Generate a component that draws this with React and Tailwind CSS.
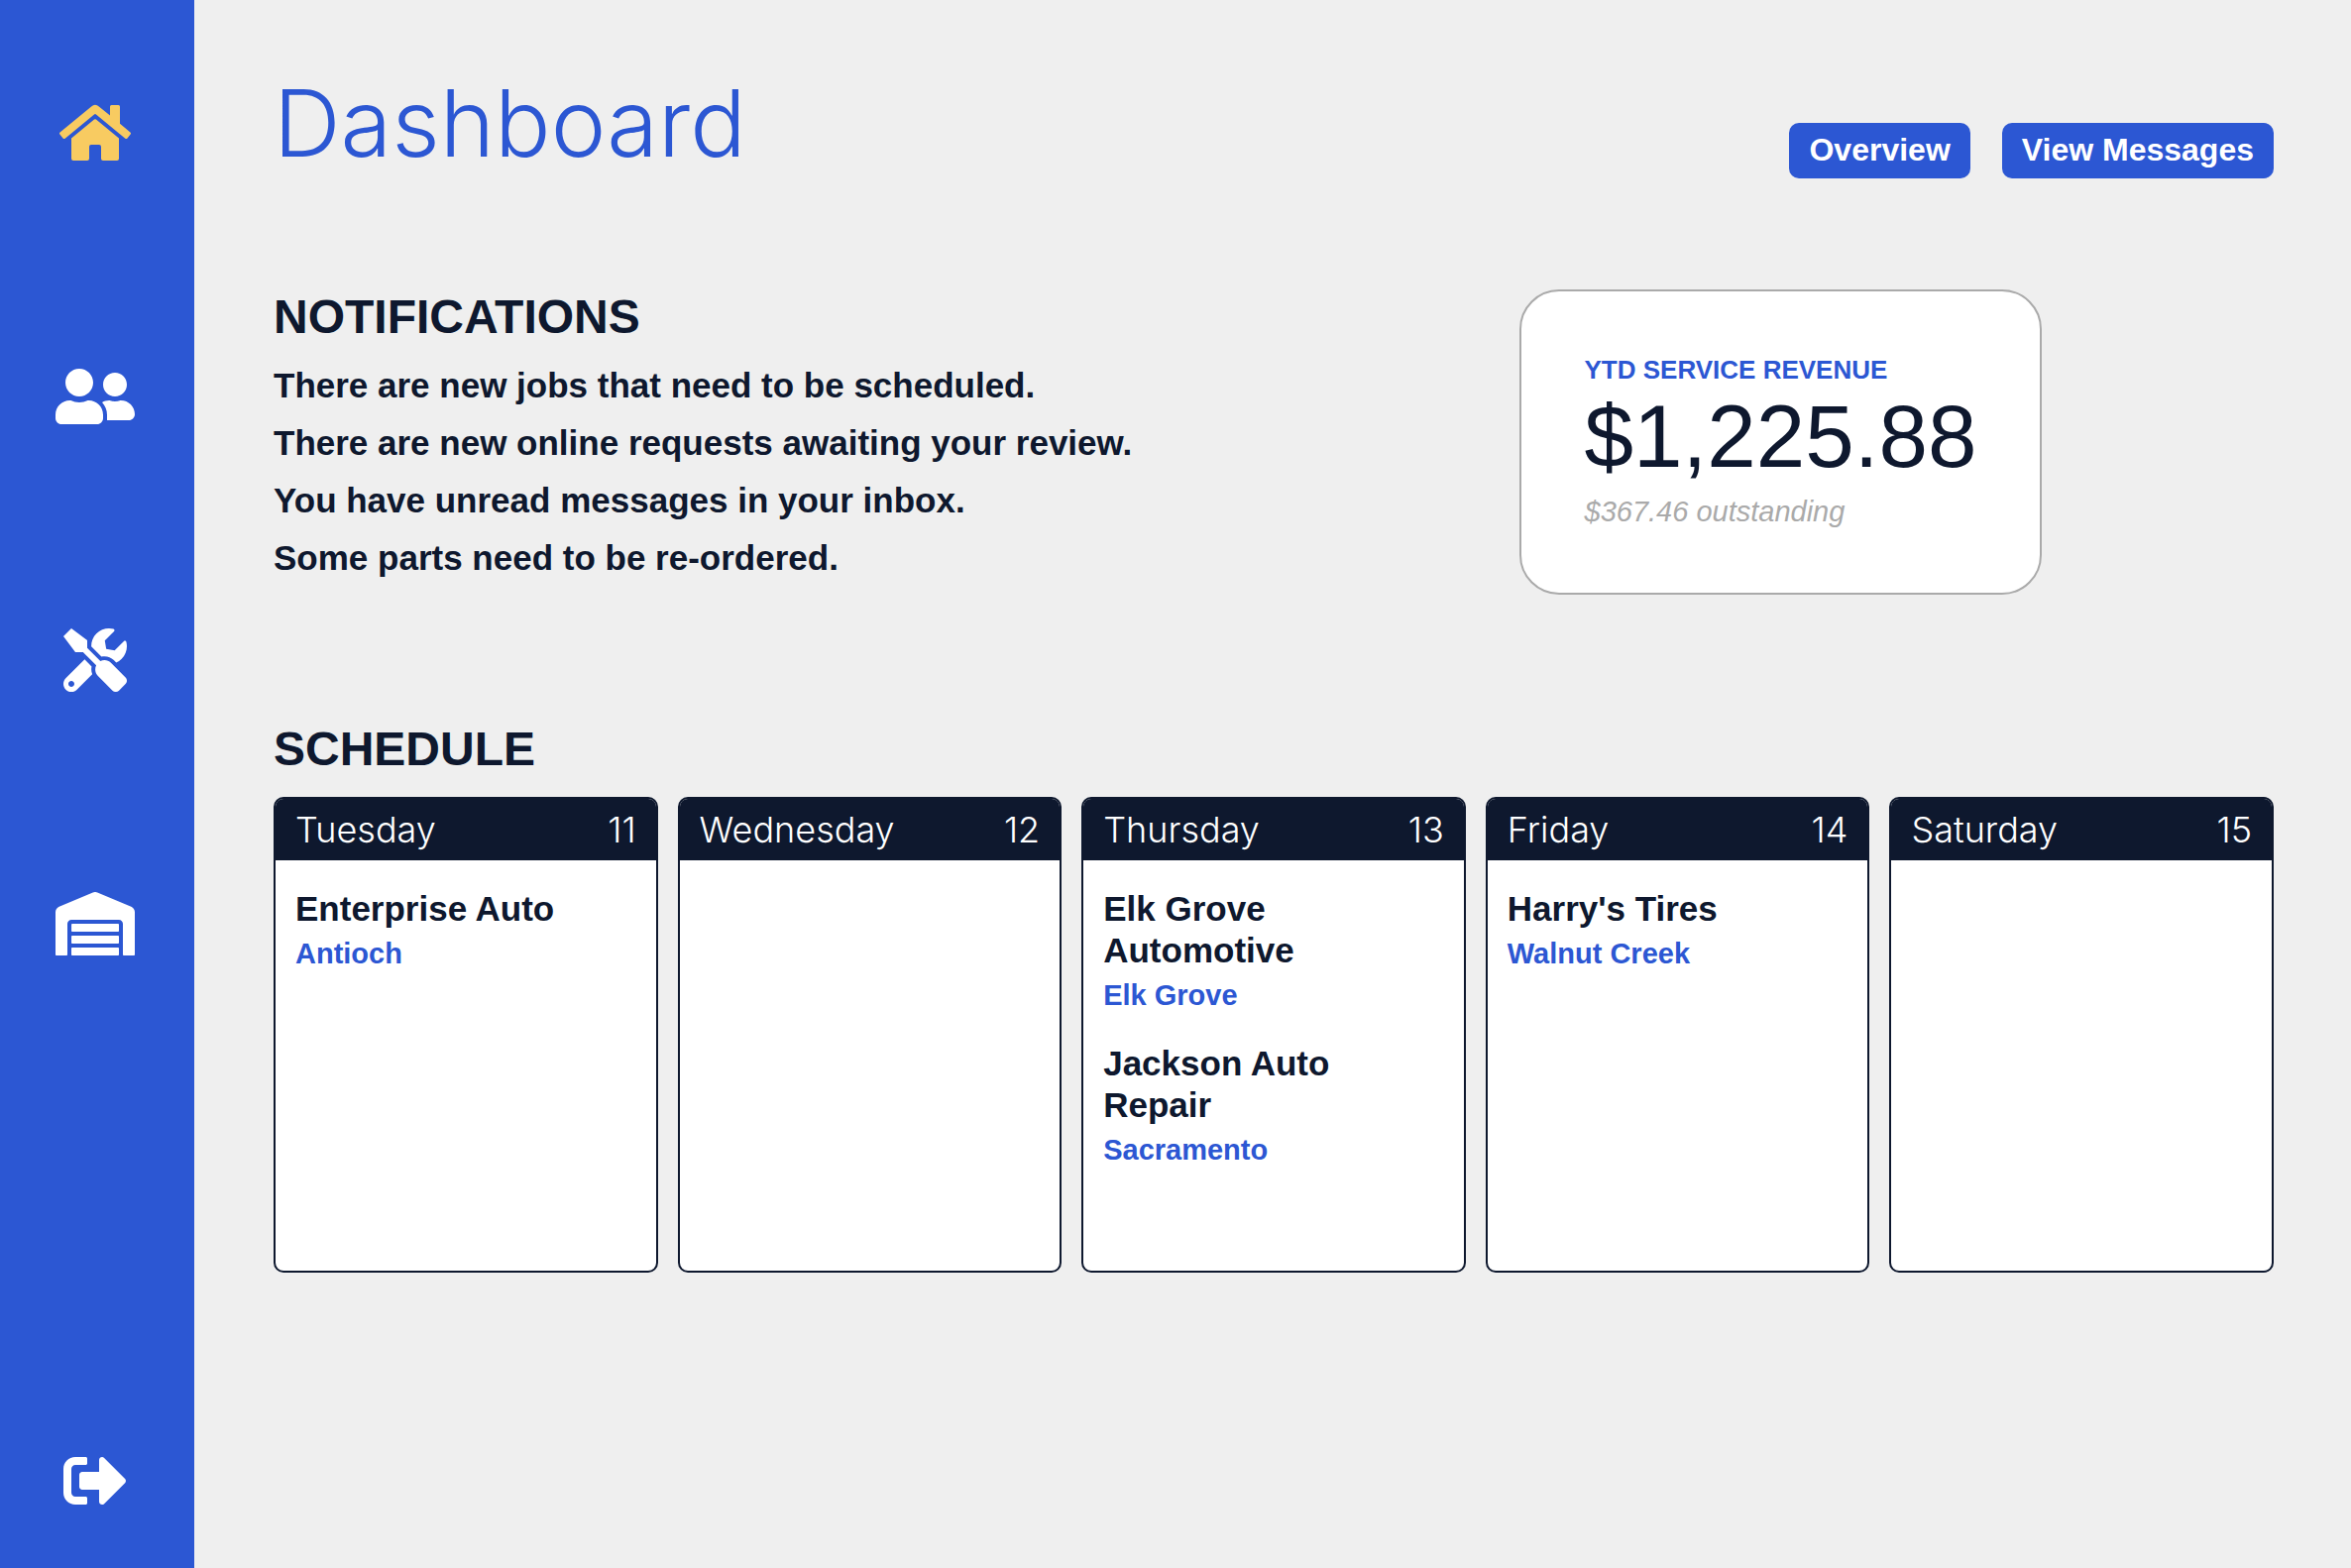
import { FaHome, FaUserFriends, FaTools, FaWarehouse, FaSignOutAlt } from "react-icons/fa";

const links = [
  { label: "Home", Icon: FaHome, color: "text-[#f8cb61]" },
  { label: "Customers", Icon: FaUserFriends, color: "text-white" },
  { label: "Services", Icon: FaTools, color: "text-white" },
  { label: "Warehouse", Icon: FaWarehouse, color: "text-white" },
];

const notifications = [
  "There are new jobs that need to be scheduled.",
  "There are new online requests awaiting your review.",
  "You have unread messages in your inbox.",
  "Some parts need to be re-ordered.",
];

const days = [
  { name: "Tuesday", date: 11, jobs: [{ shop: "Enterprise Auto", city: "Antioch" }] },
  { name: "Wednesday", date: 12, jobs: [] },
  {
    name: "Thursday",
    date: 13,
    jobs: [
      { shop: "Elk Grove Automotive", city: "Elk Grove" },
      { shop: "Jackson Auto Repair", city: "Sacramento" },
    ],
  },
  { name: "Friday", date: 14, jobs: [{ shop: "Harry's Tires", city: "Walnut Creek" }] },
  { name: "Saturday", date: 15, jobs: [] },
];

function Sidebar() {
  return (
    <nav className="flex w-[196px] shrink-0 flex-col items-center justify-between bg-[#2c57d3] pt-[102px] pr-1 pb-14">
      <div className="flex flex-col items-center gap-[202px]">
        {links.map(({ label, Icon, color }) => (
          <a key={label} href="#" aria-label={label} className={color}>
            <Icon className="h-16 w-20" />
          </a>
        ))}
      </div>
      <button type="button" aria-label="Sign out" className="text-white">
        <FaSignOutAlt className="h-16 w-20" />
      </button>
    </nav>
  );
}

function ActionButton({ children }) {
  return (
    <button type="button" className="h-14 rounded-[10px] bg-[#2c57d3] px-5 pb-0.5 text-[32px] leading-[54px] font-bold text-white">
      {children}
    </button>
  );
}

function DayCard({ day }) {
  return (
    <article className="min-h-[480px] overflow-hidden rounded-[10px] border-2 border-[#0e182e] bg-white">
      <header className="flex justify-between bg-[#0e182e] px-5 font-['Inter',sans-serif] text-[36px] leading-[62px] font-light text-white">
        <h3>{day.name}</h3>
        <span>{day.date}</span>
      </header>
      <ul className="flex flex-col gap-7 px-5 pt-7">
        {day.jobs.map((job) => (
          <li key={job.shop} className="font-bold">
            <p className="text-[35px] leading-[42px]">{job.shop}</p>
            <p className="mt-1 text-[29px] leading-10 text-[#2c57d3]">{job.city}</p>
          </li>
        ))}
      </ul>
    </article>
  );
}

export default function App() {
  return (
    <div className="flex min-h-screen bg-[#efefef] font-['Liberation_Sans',Arial,sans-serif] text-[#0e182e]">
      <Sidebar />
      <main className="min-w-0 flex-1 pt-[76px] pr-[78px] pb-16 pl-20">
        <header className="mb-28 flex items-start justify-between">
          <h1 className="font-['Inter',sans-serif] text-[94px] leading-24 font-light text-[#2c57d3]">Dashboard</h1>
          <div className="mt-12 flex gap-8">
            <ActionButton>Overview</ActionButton>
            <ActionButton>View Messages</ActionButton>
          </div>
        </header>

        <div className="grid grid-cols-2 items-start gap-7">
          <section>
            <h2 className="text-[48px] leading-14 font-bold">NOTIFICATIONS</h2>
            <ul className="mt-3 text-[35px] leading-[58px] font-bold whitespace-nowrap">
              {notifications.map((text) => (
                <li key={text}>{text}</li>
              ))}
            </ul>
          </section>
          <section className="justify-self-center rounded-[40px] border-2 border-[#aaaaaa] bg-white px-16 py-[62px]">
            <h2 className="text-[26px] leading-[34px] font-bold text-[#2c57d3]">YTD SERVICE REVENUE</h2>
            <p className="mt-0.5 text-[89px] leading-24">$1,225.88</p>
            <p className="mt-2 text-[29px] leading-10 text-[#aaaaaa] italic">$367.46 outstanding</p>
          </section>
        </div>

        <section className="mt-32">
          <h2 className="text-[48px] leading-14 font-bold">SCHEDULE</h2>
          <div className="mt-5 grid grid-cols-5 gap-5">
            {days.map((day) => (
              <DayCard key={day.name} day={day} />
            ))}
          </div>
        </section>
      </main>
    </div>
  );
}
